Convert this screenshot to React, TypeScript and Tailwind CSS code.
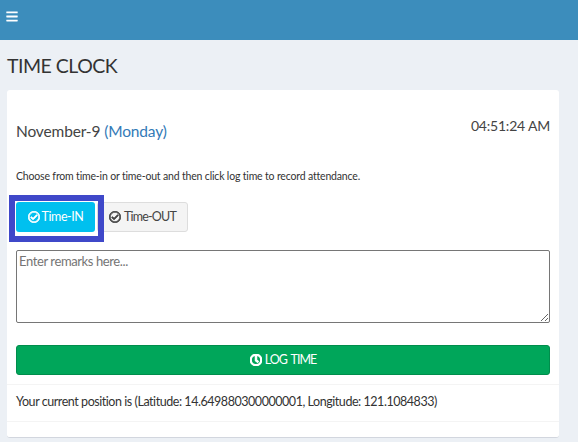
import { FaBars, FaRegClock, FaRegCheckCircle } from 'react-icons/fa';

export default function App() {
  return (
    <div className="min-h-screen bg-[#ecf0f5] font-['Lato','Noto_Sans',sans-serif] text-[#333]">
      {/* Top bar */}
      <header className="flex h-10 items-start bg-[#3c8dbc] pl-1.5 pt-[10px] text-white">
        <FaBars className="h-[13px] w-3" />
      </header>

      <main className="pl-[7px] pr-[19px]">
        <h1 className="pb-[13px] pt-[15px] text-[19.5px] leading-[22px] tracking-[-0.5px] text-[#333]">TIME CLOCK</h1>

        <section className="h-[348px] rounded-[3px] border-b border-[#d2d6de] bg-white">
          <div className="px-[9px]">
            {/* Date and clock */}
            <div className="flex items-start justify-between pt-[26px]">
              <p className="pt-[5px] text-[15.5px] leading-[20px] tracking-[-0.15px] text-[#444]">
                November-9 <span className="text-[#337ab7]">(Monday)</span>
              </p>
              <p className="text-[14px] leading-[20px] tracking-[-0.2px] text-[#444]">04:51:24 AM</p>
            </div>

            <p className="pt-[28px] text-[10.5px] leading-[15px] tracking-[-0.17px] text-[#333]">
              Choose from time-in or time-out and then click log time to record attendance.
            </p>

            {/* Time-in / time-out */}
            <div className="flex pt-[18px]">
              <div className="relative">
                <button className="flex h-[30px] w-[79px] items-center justify-center gap-[2px] rounded-[3px] bg-[#00c0ef] pt-px text-[12.5px] tracking-[-0.45px] text-white">
                  <FaRegCheckCircle className="mb-[2px] h-3 w-3" stroke="currentColor" strokeWidth={30} />
                  Time-IN
                </button>
                <div className="absolute -left-[7px] -top-[7px] h-[47px] w-[95px] border-[6px] border-[#3f48c9]" />
              </div>
              <button className="ml-[2px] flex h-[30px] w-[91px] items-center justify-center gap-[3px] rounded-[3px] border border-[#ddd] bg-[#f4f4f4] pt-px text-[12.5px] tracking-[-0.8px] text-[#444]">
                <FaRegCheckCircle className="mb-[2px] h-3 w-3" stroke="currentColor" strokeWidth={30} />
                Time-OUT
              </button>
            </div>

            <textarea
              placeholder="Enter remarks here..."
              className="mt-[18px] block h-[73px] w-full rounded-[2px] border border-[#767676] bg-white px-[2px] py-[1px] text-[13px] leading-[18px] tracking-[-0.4px] placeholder:text-[#757575]"
            />

            <button className="mt-[22px] flex h-[30px] w-full items-center justify-center gap-[3px] rounded-[3px] border border-[#008d4c] bg-[#00a65a] pt-px text-[12.5px] tracking-[-1px] text-white [word-spacing:2px]">
              <FaRegClock className="mb-[2px] h-3 w-3" stroke="currentColor" strokeWidth={50} />
              LOG TIME
            </button>
          </div>

          {/* Current position */}
          <p className="mt-[9px] border-y border-[#f4f4f4] px-[9px] pb-[9px] pt-[7px] text-[12.5px] leading-[20px] tracking-[-0.45px] text-[#333]">
            Your current position is (Latitude: 14.649880300000001, Longitude: 121.1084833)
          </p>
        </section>
      </main>
    </div>
  );
}
